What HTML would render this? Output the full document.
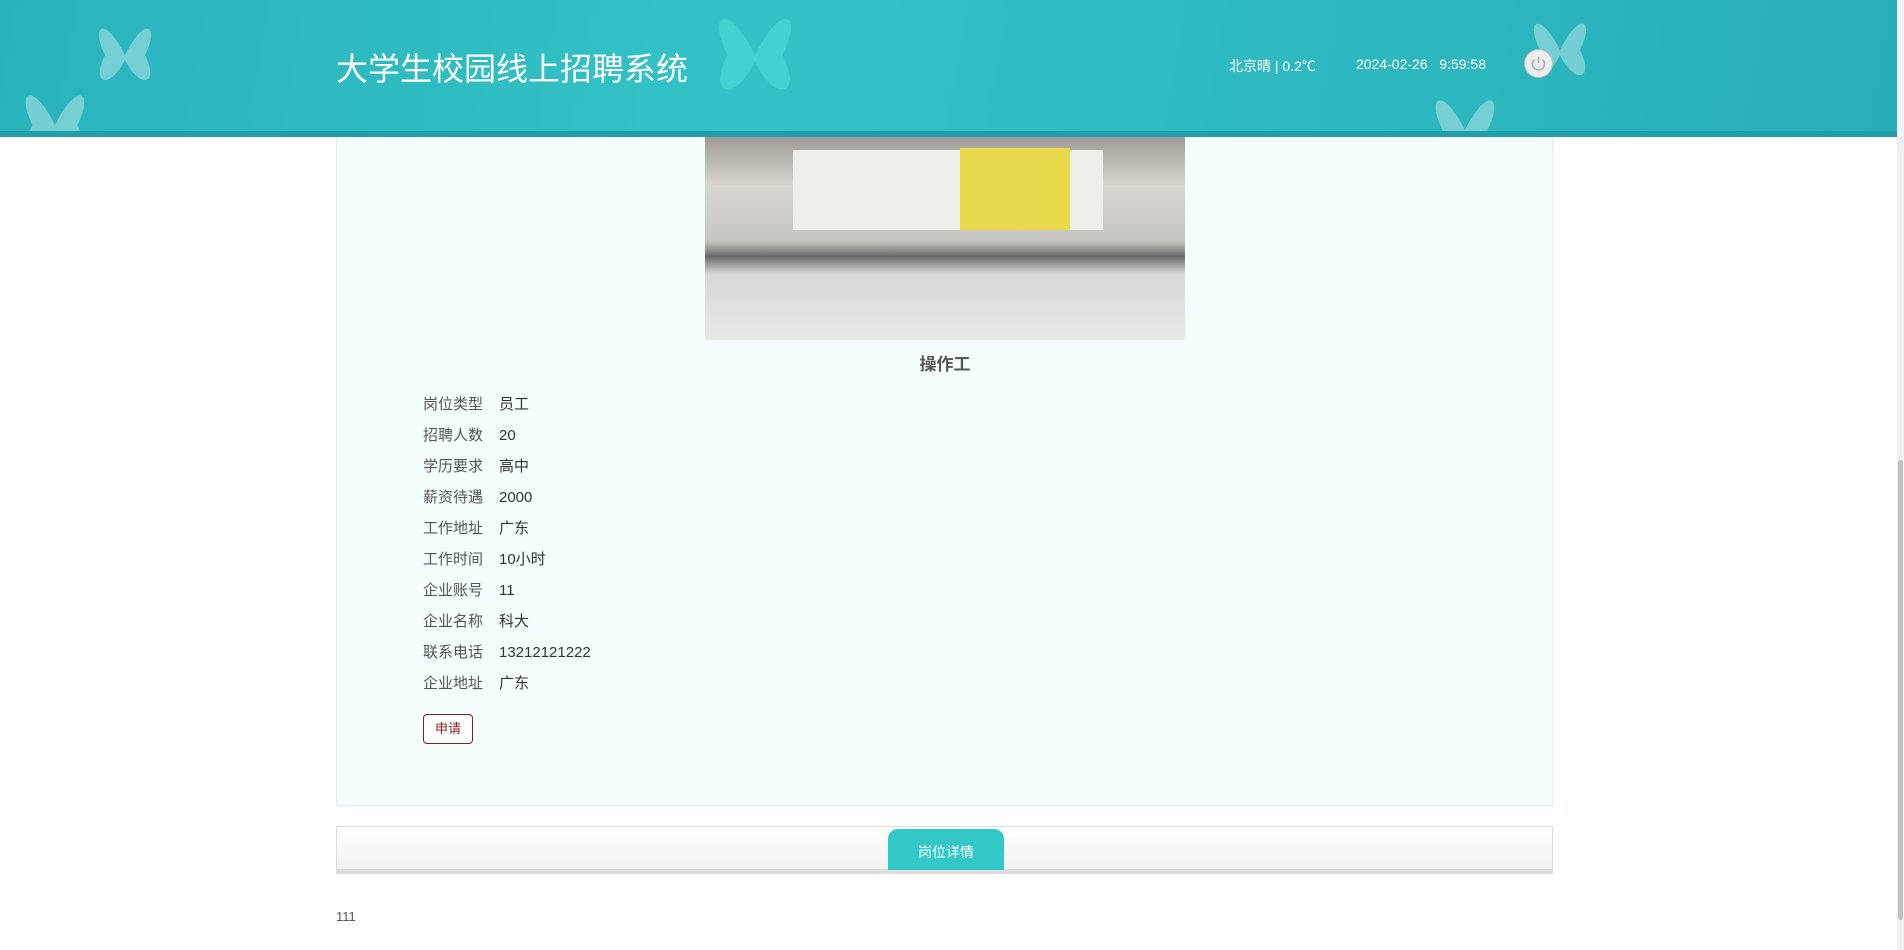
<!DOCTYPE html>
<html><head><meta charset="utf-8"><style>
*{margin:0;padding:0;box-sizing:border-box}
body{width:1904px;height:950px;overflow:hidden;background:#fff;font-family:"Liberation Sans","Noto Sans CJK SC",sans-serif;position:relative}
.hdr{position:absolute;left:0;top:0;width:1897px;height:137px;background:linear-gradient(100deg,#2ab3bb 0%,#33c3c6 40%,#2fbcc2 60%,#28aeb8 100%);overflow:hidden;z-index:5}
.hdr .strip{position:absolute;left:0;right:0;bottom:0;height:6px;background:#229ea8}
.title{position:absolute;left:336px;top:44px;color:#fff;font-size:32px;font-family:"Liberation Sans","WenQuanYi Zen Hei",sans-serif}
.wx{position:absolute;left:1229px;top:56px;color:#fff;font-size:14px}
.dt{position:absolute;left:1356px;top:56px;color:#fff;font-size:14px}
.pw{position:absolute;left:1524px;top:49px;width:29px;height:29px;border-radius:50%;background:#eee;border:1px solid #bbb}
.bf{position:absolute;opacity:.35}
.panel{position:absolute;left:336px;top:120px;width:1217px;height:686px;background:#f5fffe;border:1px solid #dcefee}
.img{position:absolute;left:705px;top:120px;width:480px;height:220px;background:linear-gradient(180deg,#8b8780 0%,#d9d6d0 30%,#c8c6c2 55%,#6c6a68 62%,#d8d8d6 70%,#e8e8e6 100%)}
.bed{position:absolute;left:88px;top:30px;width:310px;height:80px;background:#eeeeea}
.ylw{position:absolute;left:255px;top:28px;width:110px;height:82px;background:#e8d84c}
.jt{position:absolute;left:0;width:1890px;top:350px;text-align:center;font-weight:bold;font-size:17px;color:#555}
.row{position:absolute;left:423px;font-size:15px;line-height:20px;height:20px;color:#555}
.row b{font-weight:normal;position:absolute;left:76px;top:0;line-height:20px;color:#333;white-space:nowrap}
.btn{position:absolute;left:423px;top:714px;width:50px;height:30px;border:1px solid #8b1a1a;border-radius:4px;color:#8b1a1a;font-size:13px;text-align:center;line-height:28px;background:#fff}
.tabs{position:absolute;left:336px;top:826px;width:1217px;height:48px;border:1px solid #ddd;background:linear-gradient(#fff,#f2f2f2);border-bottom:5px solid #ddd}
.tab{position:absolute;left:888px;top:829px;width:116px;height:41px;background:#33c8c8;border-radius:10px 10px 0 0;color:#fff;font-size:14px;text-align:center;line-height:46px}
.ft{position:absolute;left:336px;top:909px;font-size:13px;color:#555}
.sb{position:absolute;left:1897px;top:0;width:7px;height:950px;background:#f1f1f1}
.sb div{position:absolute;left:1px;top:460px;width:5px;height:460px;background:#c1c1c1;border-radius:3px}
</style></head><body>
<div class="hdr">
<svg class="bf" style="left:85px;top:15px" width="80" height="80" viewBox="0 0 80 80"><path d="M40 40C20 0 5 10 20 40C5 70 25 75 40 45C55 75 75 70 60 40C75 10 60 0 40 40Z" fill="#fff"/></svg>
<svg class="bf" style="left:700px;top:0" width="110" height="110" viewBox="0 0 80 80"><path d="M40 40C20 0 5 10 20 40C5 70 25 75 40 45C55 75 75 70 60 40C75 10 60 0 40 40Z" fill="#5ef0e6"/></svg>
<svg class="bf" style="left:1520px;top:10px" width="80" height="80" viewBox="0 0 80 80"><path d="M40 40C20 0 5 10 20 40C5 70 25 75 40 45C55 75 75 70 60 40C75 10 60 0 40 40Z" fill="#fff"/></svg>
<svg class="bf" style="left:1420px;top:85px" width="90" height="90" viewBox="0 0 80 80"><path d="M40 40C20 0 5 10 20 40C5 70 25 75 40 45C55 75 75 70 60 40C75 10 60 0 40 40Z" fill="#fff"/></svg>
<svg class="bf" style="left:0;top:80px" width="110" height="90" viewBox="0 0 80 80"><path d="M40 40C20 0 5 10 20 40C5 70 25 75 40 45C55 75 75 70 60 40C75 10 60 0 40 40Z" fill="#fff"/></svg>
<div class="title">大学生校园线上招聘系统</div>
<div class="wx">北京晴 | 0.2℃</div>
<div class="dt">2024-02-26&nbsp;&nbsp;&nbsp;9:59:58</div>
<div class="pw"><svg width="27" height="27" viewBox="0 0 27 27"><path d="M9.5 9.5A6 6 0 1 0 17.5 9.5M13.5 6.5V13" stroke="#aaa" stroke-width="1.5" fill="none"/></svg></div>
<div class="strip"></div>
</div>
<div class="panel"></div>
<div class="img"><div class="bed"></div><div class="ylw"></div></div>
<div class="jt">操作工</div>
<div class="row" style="top:395px">岗位类型<b>员工</b></div>
<div class="row" style="top:426px">招聘人数<b>20</b></div>
<div class="row" style="top:457px">学历要求<b>高中</b></div>
<div class="row" style="top:488px">薪资待遇<b>2000</b></div>
<div class="row" style="top:519px">工作地址<b>广东</b></div>
<div class="row" style="top:550px">工作时间<b>10小时</b></div>
<div class="row" style="top:581px">企业账号<b>11</b></div>
<div class="row" style="top:612px">企业名称<b>科大</b></div>
<div class="row" style="top:643px">联系电话<b>13212121222</b></div>
<div class="row" style="top:674px">企业地址<b>广东</b></div>
<div class="btn">申请</div>
<div class="tabs"></div>
<div class="tab">岗位详情</div>
<div class="ft">111</div>
<div class="sb"><div></div></div>
</body></html>
